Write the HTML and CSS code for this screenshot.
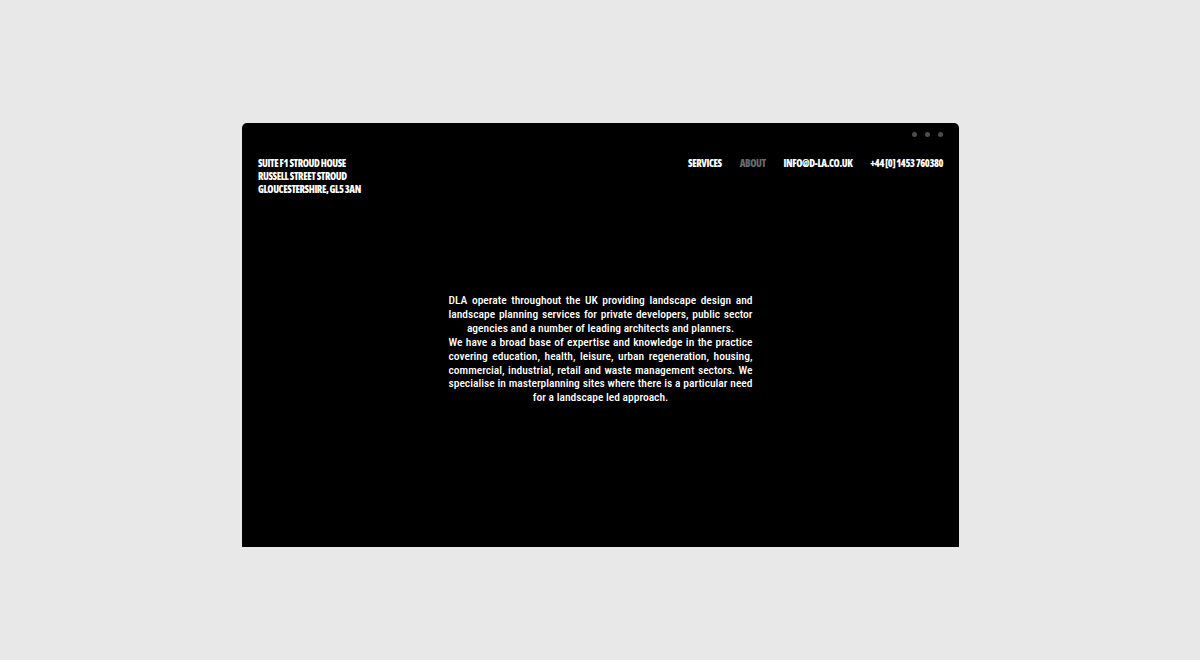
FILE: index.html
```html
<!DOCTYPE html>
<html>
<head>
<meta charset="utf-8">
<link rel="stylesheet" href="styles.css">
</head>
<body>
<div class="window">
  <div class="topbar">
    <span class="dot"></span><span class="dot"></span><span class="dot"></span>
  </div>
  <header class="header">
    <address class="address">
      <div>SUITE F1 STROUD HOUSE</div>
      <div>RUSSELL STREET STROUD</div>
      <div>GLOUCESTERSHIRE, GL5 3AN</div>
    </address>
    <nav class="nav">
      <a class="nav-link">SERVICES</a>
      <a class="nav-link muted">ABOUT</a>
      <a class="nav-link">INFO@D-LA.CO.UK</a>
      <a class="nav-link">+44 [0] 1453 760380</a>
    </nav>
  </header>
  <main class="main">
    <p class="about">DLA operate throughout the UK providing landscape design and landscape planning services for private developers, public sector agencies and a number of leading architects and planners.<br>We have a broad base of expertise and knowledge in the practice covering education, health, leisure, urban regeneration, housing, commercial, industrial, retail and waste management sectors. We specialise in masterplanning sites where there is a particular need for a landscape led approach.</p>
  </main>
</div>
</body>
</html>
```
FILE: styles.css
```css
html, body {
  margin: 0;
  padding: 0;
}
body {
  background: #e8e8e8;
  width: 1200px;
  height: 660px;
  overflow: hidden;
  padding-top: 123px;
  box-sizing: border-box;
}
.window {
  width: 717px;
  height: 424px;
  margin-left: 242px;
  background: #000;
  border-radius: 5px 5px 0 0;
  color: #fff;
}
.topbar {
  display: flex;
  justify-content: flex-end;
  gap: 8px;
  padding: 9px 16px 0 0;
  height: 13px;
}
.dot {
  width: 5px;
  height: 5px;
  border-radius: 50%;
  background: #4d4d4d;
}
.header {
  display: flex;
  justify-content: space-between;
  align-items: flex-start;
  padding: 12px 16px 0 16px;
  font-family: "Open Sans", "Roboto", sans-serif;
  font-stretch: condensed;
  font-weight: 800;
  font-size: 10px;
  line-height: 13px;
  letter-spacing: -0.42px;
}
.address {
  font-style: normal;
}
.nav {
  display: flex;
  gap: 18px;
}
.nav-link { color: #fff; }
.nav-link.muted { color: #6a6a6a; }
.main {
  display: flex;
  justify-content: center;
  padding-top: 98px;
}
.about {
  margin: 0;
  width: 304px;
  text-align: justify;
  text-align-last: center;
  font-family: "Roboto", sans-serif;
  font-stretch: condensed;
  font-size: 11.5px;
  line-height: 13.9px;
  font-weight: 500;
}
```
